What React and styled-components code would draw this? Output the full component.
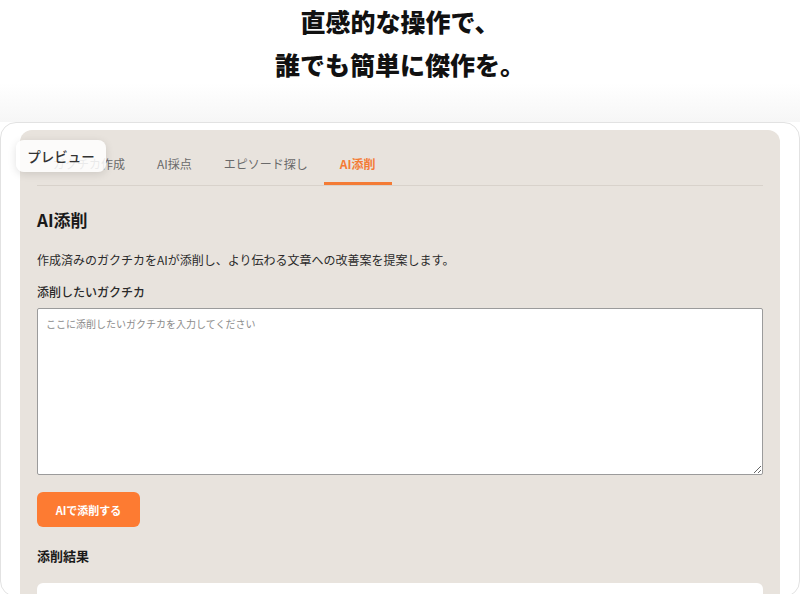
import React from "react";
import styled, { createGlobalStyle } from "styled-components";

const GlobalStyle = createGlobalStyle`
  * { box-sizing: border-box; }
  html, body { margin: 0; padding: 0; background: #ffffff; }
  body {
    font-family: "Noto Sans CJK JP", "Noto Sans", sans-serif;
    color: #1f1f1f;
    overflow: hidden;
  }
`;

const Page = styled.div`
  width: 800px;
  height: 594px;
  overflow: hidden;
`;

const Hero = styled.header`
  height: 122px;
  background: linear-gradient(to bottom, #ffffff 0%, #ffffff 68%, #f6f6f6 100%);
  text-align: center;
`;

const HeroTitle = styled.h1`
  margin: 0;
  font-size: 25px;
  line-height: 43px;
  font-weight: 900;
  color: #111;
  letter-spacing: 0;
`;

const Card = styled.section`
  position: relative;
  height: 475px;
  background: #ffffff;
  border: 1px solid #e2e2e2;
  border-radius: 16px;
  padding: 7px 19px 0;
  overflow: hidden;
`;

const Badge = styled.div`
  position: absolute;
  left: 15px;
  top: 17px;
  width: 90px;
  height: 32px;
  display: flex;
  align-items: center;
  justify-content: center;
  background: rgba(255, 255, 255, 0.86);
  border-radius: 8px;
  box-shadow: 0 2px 8px rgba(0, 0, 0, 0.12);
  font-size: 13.5px;
  font-weight: 500;
  color: #333;
  z-index: 2;
`;

const Panel = styled.div`
  background: #e8e3dd;
  border-radius: 12px;
  padding: 16px 17px 40px;
  min-height: 600px;
`;

const Tabs = styled.nav`
  display: flex;
  border-bottom: 1px solid #d8d2cb;
`;

const Tab = styled.div`
  padding: 9px 16px 9px;
  font-size: 12px;
  line-height: 18px;
  font-weight: ${(p) => (p.$active ? 700 : 400)};
  color: ${(p) => (p.$active ? "#f47b35" : "#6a6a6a")};
  border-bottom: 3px solid ${(p) => (p.$active ? "#f47b35" : "transparent")};
  white-space: nowrap;
`;

const Heading = styled.h2`
  margin: 22px 0 0;
  font-size: 17px;
  line-height: 24px;
  font-weight: 700;
  color: #1a1a1a;
`;

const Description = styled.p`
  margin: 19px 0 0;
  font-size: 12px;
  line-height: 18px;
  color: #2a2a2a;
`;

const Label = styled.label`
  display: block;
  margin: 14px 0 7px;
  font-size: 12px;
  line-height: 18px;
  font-weight: 500;
  color: #2a2a2a;
`;

const TextArea = styled.textarea`
  display: block;
  width: 100%;
  height: 167px;
  margin: 0;
  padding: 8px 8px;
  background: #ffffff;
  border: 1px solid #9b9b9b;
  border-radius: 2px;
  font-family: inherit;
  font-size: 10px;
  line-height: 14px;
  color: #222;
  resize: vertical;
  outline: none;

  &::placeholder {
    color: #8c8c8c;
  }
`;

const Button = styled.button`
  display: flex;
  align-items: center;
  justify-content: center;
  margin-top: 17px;
  width: 103px;
  height: 35px;
  border: none;
  border-radius: 6px;
  background: #fd7b32;
  color: #ffffff;
  font-family: inherit;
  font-size: 11px;
  font-weight: 700;
  cursor: pointer;
`;

const SubHeading = styled.h3`
  margin: 19px 0 0;
  font-size: 13px;
  line-height: 20px;
  font-weight: 700;
  color: #1a1a1a;
`;

const ResultBox = styled.div`
  margin-top: 17px;
  height: 120px;
  background: #ffffff;
  border-radius: 6px;
`;

const tabs = ["ガクチカ作成", "AI採点", "エピソード探し", "AI添削"];

export default function App() {
  return (
    <>
      <GlobalStyle />
      <Page>
        <Hero>
          <HeroTitle>
            直感的な操作で、
            <br />
            誰でも簡単に傑作を。
          </HeroTitle>
        </Hero>
        <Card>
          <Badge>プレビュー</Badge>
          <Panel>
            <Tabs>
              {tabs.map((t) => (
                <Tab key={t} $active={t === "AI添削"}>
                  {t}
                </Tab>
              ))}
            </Tabs>
            <Heading>AI添削</Heading>
            <Description>
              作成済みのガクチカをAIが添削し、より伝わる文章への改善案を提案します。
            </Description>
            <Label>添削したいガクチカ</Label>
            <TextArea placeholder="ここに添削したいガクチカを入力してください" />
            <Button>AIで添削する</Button>
            <SubHeading>添削結果</SubHeading>
            <ResultBox />
          </Panel>
        </Card>
      </Page>
    </>
  );
}
